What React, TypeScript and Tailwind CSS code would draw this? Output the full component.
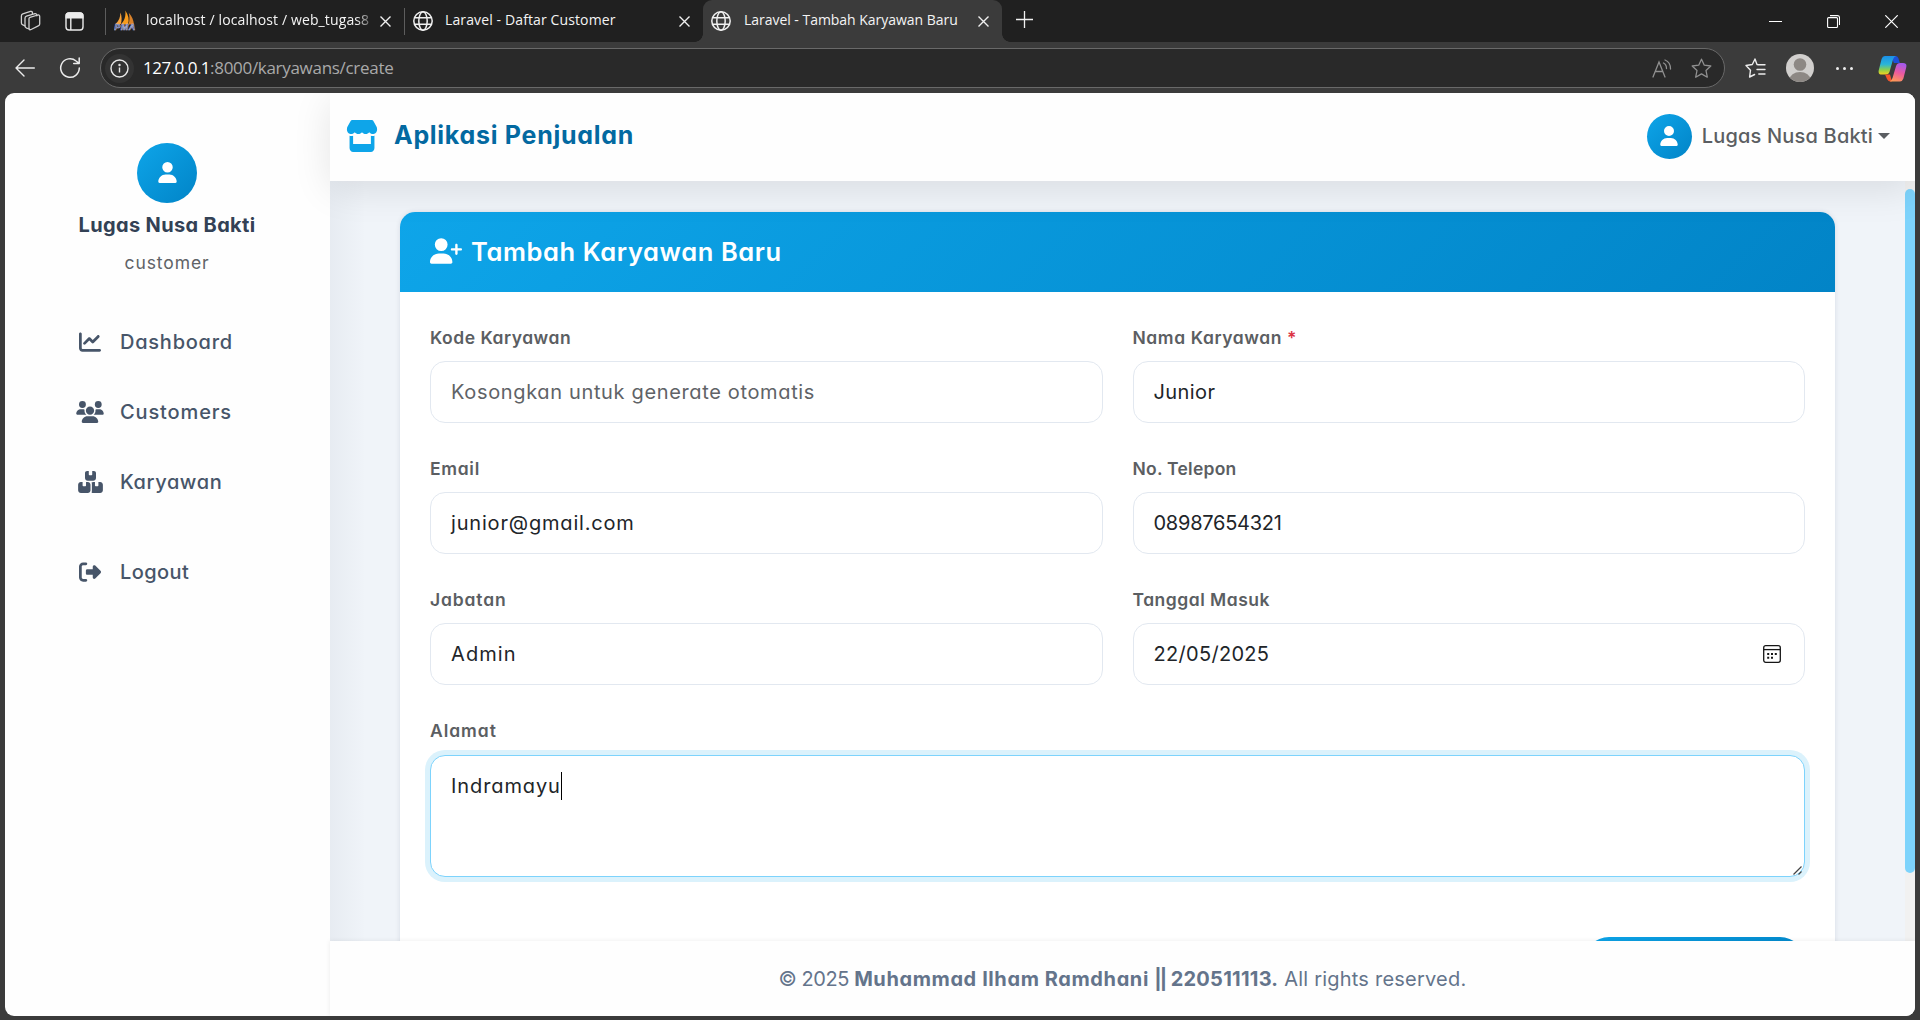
import type { ReactNode } from "react";
import {
  FaBoxesStacked,
  FaChartLine,
  FaRightFromBracket,
  FaStore,
  FaUser,
  FaUserPlus,
  FaUsers,
} from "react-icons/fa6";

function GlobeIcon() {
  return (
    <svg width="20" height="20" viewBox="0 0 20 20" fill="none" stroke="#f0f0f0" strokeWidth="1.5" className="shrink-0">
      <circle cx="10" cy="10" r="9.2" />
      <ellipse cx="10" cy="10" rx="4.2" ry="9.2" />
      <path d="M1.6 6.8h16.8M1.6 13.2h16.8" />
    </svg>
  );
}

function CloseIcon() {
  return (
    <svg width="11" height="11" viewBox="0 0 11 11" stroke="#f0f0f0" strokeWidth="1.4" className="shrink-0">
      <path d="M.5.5l10 10M10.5.5l-10 10" />
    </svg>
  );
}

function WorkspacesIcon() {
  return (
    <svg width="22" height="22" viewBox="0 0 22 22" fill="none" stroke="#d0d0d0" strokeWidth="1.3" strokeLinejoin="round" strokeLinecap="round" className="-ml-px mr-px shrink-0">
      <path d="M10 8.600q.1-.9 1-1.200l7.800-2.400q1.900-.4 1.900 1.400v7.600q0 1.400-1.400 1.900l-7.200 3.600q-2 .8-2.100-1.200z" />
      <path d="M10.200 19l-2.600-.9q-1.600-.6-1.600-2V8.200q0-1.600 1.400-2L16 3.600q1.400-.3 1.800 1.200v1" />
      <path d="M6 15.800l-2.200-.9q-1.400-.6-1.400-2V6q0-1.600 1.400-2.200L11.500 1.400q1.400-.4 1.900.8v1.600" />
    </svg>
  );
}

function VerticalTabsIcon() {
  return (
    <svg width="19" height="19" viewBox="0 0 19 19" fill="none" stroke="#ececec" strokeWidth="1.4" className="shrink-0">
      <rect x="1" y="1" width="17" height="17" rx="3" />
      <path d="M1.200 4a3 3 0 0 1 3-3h10.600a3 3 0 0 1 3 3v1.800H1.200z" fill="#ececec" />
      <path d="M5.800 5v13" />
    </svg>
  );
}

function PmaIcon() {
  return (
    <svg width="22" height="21" viewBox="0 0 22 21" className="-mt-px shrink-0">
      <path d="M1.500 14C5 11 6.500 7 6.300 2.500 8 6 8 11 6.800 14z" fill="#f7a13a" />
      <path d="M6.800 14.500C10.500 11 12 6 11.300.5 14.500 5 15.500 10 14 14.500z" fill="#f89c1c" />
      <path d="M14.500 14.500C16 10 15.500 6 14.800 2.800 18 6.500 19.500 10 20 14.500z" fill="#d9822b" />
      <text x="0.300" y="20.300" textLength="21" fontSize="9" fontWeight="700" fontStyle="italic" fontFamily="Liberation Sans, sans-serif" fill="#3c4482" stroke="#c4c8e6" strokeWidth=".5">PMA</text>
    </svg>
  );
}

function CopilotIcon() {
  return (
    <svg width="29" height="27" viewBox="0 0 29 27" className="shrink-0">
      <defs>
        <linearGradient id="cpA" x1="0" y1="0" x2="0" y2="1">
          <stop offset="0" stopColor="#1b8fe8" />
          <stop offset=".45" stopColor="#2ab5d8" />
          <stop offset=".75" stopColor="#8ed04a" />
          <stop offset="1" stopColor="#f4d21f" />
        </linearGradient>
        <linearGradient id="cpB" x1=".6" y1="0" x2=".3" y2="1">
          <stop offset="0" stopColor="#a559ec" />
          <stop offset=".5" stopColor="#ec5a9e" />
          <stop offset="1" stopColor="#ff9a57" />
        </linearGradient>
      </defs>
      <path d="M13 1h4.500q2 0 2.800 2l1.600 5h-6z" fill="#1d50d8" />
      <path d="M6.800 1H18q-2.200.6-3 3.400l-3.300 11.800q-.9 3.300-3.800 3.300H4Q-.3 19.500.8 15L3.600 4Q4.500 1 6.800 1z" fill="url(#cpA)" />
      <path d="M7 19.500h5l2 7q-4 .3-5-2.500z" fill="#f2542c" />
      <path d="M22.200 8H25q4.300 0 3.200 4.500l-2.800 11Q24.400 26.500 22 26.500H11.500q2.200-.6 3-3.400L18 11.300Q19 8 22.200 8z" fill="url(#cpB)" />
    </svg>
  );
}

function Browser() {
  return (
    <>
      <div className="flex h-[42px] shrink-0 bg-[#202020] font-['Open_Sans',sans-serif] text-[14px] leading-[20px] text-[#f4f4f4]">
        <div className="flex w-[105px] items-center pl-[20px]">
          <WorkspacesIcon />
          <span className="w-[23px]" />
          <VerticalTabsIcon />
        </div>
        <div className="flex w-[299px] items-center border-l [border-image:linear-gradient(#202020_20%,#5d5d5d_20%,#5d5d5d_82%,#202020_82%)_1] pl-[8px]">
          <PmaIcon />
          <span className="ml-[10px] w-[226px] whitespace-nowrap pb-[2px] tracking-[0.12px] [mask-image:linear-gradient(90deg,black_93%,transparent_102%)]">
            localhost / localhost / web_tugas8
          </span>
          <span className="ml-[8px]"><CloseIcon /></span>
        </div>
        <div className="flex w-[299px] items-center border-l [border-image:linear-gradient(#202020_20%,#5d5d5d_20%,#5d5d5d_82%,#202020_82%)_1] pl-[8px]">
          <GlobeIcon />
          <span className="ml-[12px] w-[234px] whitespace-nowrap pb-[2px] tracking-[0.12px]">Laravel - Daftar Customer</span>
          <CloseIcon />
        </div>
        <div className="relative flex w-[299px] items-center rounded-t-[9px] bg-[#3b3b3b] pl-[8px]">
          <span className="absolute -left-[8px] bottom-0 size-[8px] bg-[radial-gradient(circle_at_0_0,#202020_7.5px,#3b3b3b_8px)]" />
          <span className="absolute -right-[8px] bottom-0 size-[8px] bg-[radial-gradient(circle_at_100%_0,#202020_7.5px,#3b3b3b_8px)]" />
          <GlobeIcon />
          <span className="ml-[13px] w-[234px] whitespace-nowrap pb-[2px] tracking-[-0.03px]">Laravel - Tambah Karyawan Baru</span>
          <CloseIcon />
        </div>
        <div className="flex flex-1 items-center pl-[14px]">
          <svg width="17" height="17" viewBox="0 0 17 17" stroke="#f0f0f0" strokeWidth="1.3" className="-mt-1">
            <path d="M8.500 0v17M0 8.500h17" />
          </svg>
        </div>
        <div className="flex items-center gap-[45px] pr-[22px]">
          <span className="h-px w-[13px] bg-white" />
          <svg width="13" height="13" viewBox="0 0 13 13" fill="none" stroke="#fff" strokeWidth="1.1">
            <rect x=".6" y="2.600" width="9.900" height="9.900" rx="1" />
            <path d="M3 .6h7.500q2 0 2 2V10" />
          </svg>
          <svg width="13" height="13" viewBox="0 0 13 13" stroke="#fff" strokeWidth="1.2">
            <path d="M.3.3l12.400 12.400M12.700.3L.3 12.700" />
          </svg>
        </div>
      </div>
      <div className="flex h-[51px] shrink-0 items-center bg-[#3b3b3b] pl-[15px] pt-px">
        <svg width="20" height="18" viewBox="0 0 20 18" fill="none" stroke="#ececec" strokeWidth="1.4" strokeLinecap="round" strokeLinejoin="round">
          <path d="M19.300 9H1M9 1L1 9l8 8" />
        </svg>
        <svg width="22" height="22" viewBox="0 0 22 22" fill="none" stroke="#ececec" strokeWidth="1.5" strokeLinecap="round" strokeLinejoin="round" className="ml-[24px]">
          <path d="M20.300 11a9.300 9.300 0 1 1-3.200-7L20 6.300M20.200 1v5.500h-5.500" />
        </svg>
        <div className="ml-[19px] flex h-[40px] w-[1625px] items-center rounded-full border border-[#696969] bg-[#292929] pl-[4px] font-['Open_Sans',sans-serif] text-[17px]">
          <span className="grid size-[29px] place-items-center rounded-full bg-[#333333]">
            <svg width="19" height="19" viewBox="0 0 19 19" fill="none" stroke="#e8e8e8" strokeWidth="1.4">
              <circle cx="9.500" cy="9.500" r="8.500" />
              <path d="M9.500 8.500v5" />
              <circle cx="9.500" cy="6" r=".5" fill="#e8e8e8" />
            </svg>
          </span>
          <span className="ml-[9px] whitespace-nowrap tracking-[-0.52px] text-white">127.0.0.1</span>
          <span className="whitespace-nowrap tracking-[-0.3px] text-[#a9a9a9]">:8000/karyawans/create</span>
          <svg width="20" height="19" viewBox="0 0 20 19" fill="none" stroke="#909090" strokeWidth="1.3" strokeLinecap="round" className="ml-auto">
            <path d="M1 18L7 3l6 15M3.200 12.500h7.600M11.500 4q3 1.500 3 5.500M13 1q5.500 2 5.500 9" />
          </svg>
          <svg width="21" height="21" viewBox="0 0 21 21" fill="none" stroke="#909090" strokeWidth="1.3" strokeLinejoin="round" className="ml-[19px] mr-[12px]">
            <path d="M10.500 1.200l2.800 6 6.500.8-4.800 4.500 1.300 6.700-5.800-3.300-5.800 3.300L6 12.500 1.200 8l6.500-.8z" />
          </svg>
        </div>
        <svg width="21" height="20" viewBox="0 0 21 20" fill="none" stroke="#ececec" strokeWidth="1.4" strokeLinejoin="round" strokeLinecap="round" className="ml-[20px]">
          <path d="M13.500 6.800L12 6.500 10 1 7.300 6.500 1 7.500l4.500 4.700L4.600 19l5-2.500M13.800 6.800H20M12 11.500h8M13.800 16H20" />
        </svg>
        <svg width="28" height="28" viewBox="0 0 28 28" className="ml-[20px]">
          <clipPath id="av"><circle cx="14" cy="14" r="14" /></clipPath>
          <g clipPath="url(#av)">
            <path d="M0 0h28v28H0z" fill="#d1cfcd" />
            <circle cx="14" cy="10.500" r="6.300" fill="#8d8884" />
            <ellipse cx="14" cy="26" rx="10.500" ry="8" fill="#8d8884" />
          </g>
        </svg>
        <span className="ml-[22px] flex gap-[4px]">
          <i className="size-[3px] rounded-full bg-[#ececec]" />
          <i className="size-[3px] rounded-full bg-[#ececec]" />
          <i className="size-[3px] rounded-full bg-[#ececec]" />
        </span>
        <span className="ml-[25px]"><CopilotIcon /></span>
      </div>
    </>
  );
}

function NavItem({ icon, children }: { icon: ReactNode; children: ReactNode }) {
  return (
    <div className="flex h-[70px] items-center text-[20px] font-medium text-[#475569]">
      <span className="flex w-[40px] justify-center text-[22px]">{icon}</span>
      <span className="ml-[10px]">{children}</span>
    </div>
  );
}

function Field({ label, children }: { label: ReactNode; children: ReactNode }) {
  return (
    <div className="h-[131px]">
      <div className="h-[39px] pt-[3px] text-[17.5px] font-semibold leading-[26px] text-[#5b5e62]">{label}</div>
      <div className="flex h-[62px] items-center rounded-[15px] border border-[#e2e8f0] bg-white px-[20px] text-[20px] text-[#212529]">
        {children}
      </div>
    </div>
  );
}

export default function App() {
  return (
    <div className="flex h-[1020px] w-[1920px] flex-col overflow-hidden bg-[#3b3b3b] font-['Inter',sans-serif] [font-feature-settings:'cv11']">
      <Browser />
      <div className="mx-[5px] flex h-[923px] overflow-hidden rounded-[9px] bg-[#fefefe]">
        <aside className="flex w-[325px] shrink-0 flex-col">
          <div className="flex flex-col items-center pr-px pt-[50px]">
            <div className="grid size-[60px] place-items-center rounded-full bg-linear-135 from-[#0ea5e9] to-[#0284c7] text-white">
              <FaUser className="-mt-px h-[21px] w-[21px]" />
            </div>
            <div className="mt-[7px] text-[20px] font-bold leading-[30px] tracking-[0.35px] text-[#334155]">Lugas Nusa Bakti</div>
            <div className="mt-[10px] text-[17.5px] leading-[26px] tracking-[0.9px] text-[#606367]">customer</div>
          </div>
          <nav className="mt-[31px] flex flex-col pl-[65px]">
            <NavItem icon={<FaChartLine />}><span className="tracking-[0.76px]">Dashboard</span></NavItem>
            <NavItem icon={<FaUsers className="h-[22px] w-[28px]" />}><span className="tracking-[0.87px]">Customers</span></NavItem>
            <NavItem icon={<FaBoxesStacked className="h-[22px] w-[25px]" />}><span className="tracking-[0.6px]">Karyawan</span></NavItem>
            <div className="mt-[20px]">
              <NavItem icon={<FaRightFromBracket />}><span className="tracking-[0.4px]">Logout</span></NavItem>
            </div>
          </nav>
        </aside>

        <div className="flex w-[1585px] shrink-0 flex-col">
          <header className="relative z-10 flex h-[88px] shrink-0 items-center bg-[#fefefe] pb-[2px] pl-[16px] pr-[25px] shadow-[0_8px_38px_rgba(0,0,0,0.1)]">
            <FaStore className="h-[32px] w-[32px] text-[#0ea5e9]" preserveAspectRatio="none" />
            <span className="ml-[16px] text-[25px] font-bold tracking-[0.72px] text-[#0369a1]">Aplikasi Penjualan</span>
            <div className="ml-auto flex items-center">
              <span className="grid size-[45px] place-items-center rounded-full bg-linear-135 from-[#0ea5e9] to-[#0284c7] text-white">
                <FaUser className="-mt-px size-[20px]" />
              </span>
              <span className="ml-[10px] text-[20px] font-medium tracking-[0.18px] text-[#5b5e62]">Lugas Nusa Bakti</span>
              <span className="ml-[5px] border-x-[6px] border-t-[6px] border-x-transparent border-t-[#5b5e62]" />
            </div>
          </header>

          <div className="flex h-[760px] overflow-hidden bg-[#f0f4f9]">
            <div className="w-[1575px] bg-[linear-gradient(90deg,rgba(30,50,80,0.045),transparent_36px)] px-[70px] pt-[31px]">
              <section className="h-[860px] overflow-hidden rounded-[15px] bg-white shadow-[0_0_5px_rgba(30,50,80,0.12)]">
                <div className="flex h-[80px] items-center bg-linear-135 from-[#0ea5e9] to-[#0284c7] pl-[30px] text-white">
                  <FaUserPlus className="-mt-[2px] h-[26px] w-[32px]" />
                  <h1 className="ml-[9px] text-[25.5px] font-semibold tracking-[0.6px]">Tambah Karyawan Baru</h1>
                </div>
                <form className="px-[30px] pt-[30px]">
                  <div className="grid grid-cols-2 gap-x-[30px]">
                    <Field label={<span className="tracking-[0.5px]">Kode Karyawan</span>}>
                      <span className="tracking-[0.65px] text-[#606367]">Kosongkan untuk generate otomatis</span>
                    </Field>
                    <Field label={<span className="tracking-[0.58px]">Nama Karyawan <span className="text-[#dc3545]">*</span></span>}>
                      <span className="tracking-[0.4px]">Junior</span>
                    </Field>
                    <Field label={<span className="tracking-[0.7px]">Email</span>}>
                      <span className="tracking-[0.82px]">junior@gmail.com</span>
                    </Field>
                    <Field label={<span className="tracking-[0.25px]">No. Telepon</span>}>
                      <span className="tracking-[-0.25px]">08987654321</span>
                    </Field>
                    <Field label={<span className="tracking-[0.85px]">Jabatan</span>}>
                      <span className="tracking-[1.1px]">Admin</span>
                    </Field>
                    <Field label={<span className="tracking-[0.5px]">Tanggal Masuk</span>}>
                      <span className="tracking-[0.3px]">22/05/2025</span>
                      <svg width="18" height="18" viewBox="0 0 18 18" fill="none" stroke="#161616" strokeWidth="1.3" className="ml-auto mr-[3px]">
                        <rect x=".7" y=".7" width="16.600" height="16.600" rx="2" />
                        <path d="M.7 4.600h16.600" />
                        <path d="M4.200 9h2m1.800 0h2m1.800 0h2M4.200 12.700h2m1.800 0h2" strokeWidth="2" />
                      </svg>
                    </Field>
                  </div>
                  <div className="h-[40px] pt-[3px] text-[17.5px] font-semibold leading-[26px] tracking-[0.95px] text-[#5b5e62]">Alamat</div>
                  <div className="relative flex h-[122px] items-start rounded-[15px] border border-[#7dd3fc] bg-white px-[20px] pt-[14px] text-[20px] leading-[32px] text-[#212529] shadow-[0_0_0_5px_#dbf2fc]">
                    <span className="tracking-[0.9px]">Indramayu</span>
                    <span className="mt-[2px] h-[28px] w-px bg-black" />
                    <svg width="9" height="9" viewBox="0 0 9 9" stroke="#444" strokeWidth="1.2" className="absolute bottom-[1px] right-[2px]">
                      <path d="M.5 8.500l8-8M5.500 8.500l3-3" />
                    </svg>
                  </div>
                  <div className="mt-[60px] flex justify-end">
                    <div className="h-[50px] w-[221px] rounded-full bg-linear-135 from-[#0ea5e9] to-[#0284c7]" />
                  </div>
                </form>
              </section>
            </div>
            <div className="w-[10px] bg-[#f1f1f1] pt-[8px]">
              <div className="h-[684px] rounded-full bg-[#7dd3fc]" />
            </div>
          </div>

          <footer className="relative z-10 flex h-[75px] shrink-0 items-center justify-center whitespace-pre bg-[#fefefe] text-[20px] text-[#64748b] shadow-[0_0_5px_rgba(0,0,0,0.08)]">
            <span className="tracking-[-0.45px]">© 2025 </span>
            <b className="tracking-[0.6px]">Muhammad Ilham Ramdhani <span className="tracking-[-1.9px]">||</span> <span className="tracking-[0.25px]">220511113.</span></b>
            <span className="tracking-[0.22px]"> All rights reserved.</span>
          </footer>
        </div>
      </div>
    </div>
  );
}
